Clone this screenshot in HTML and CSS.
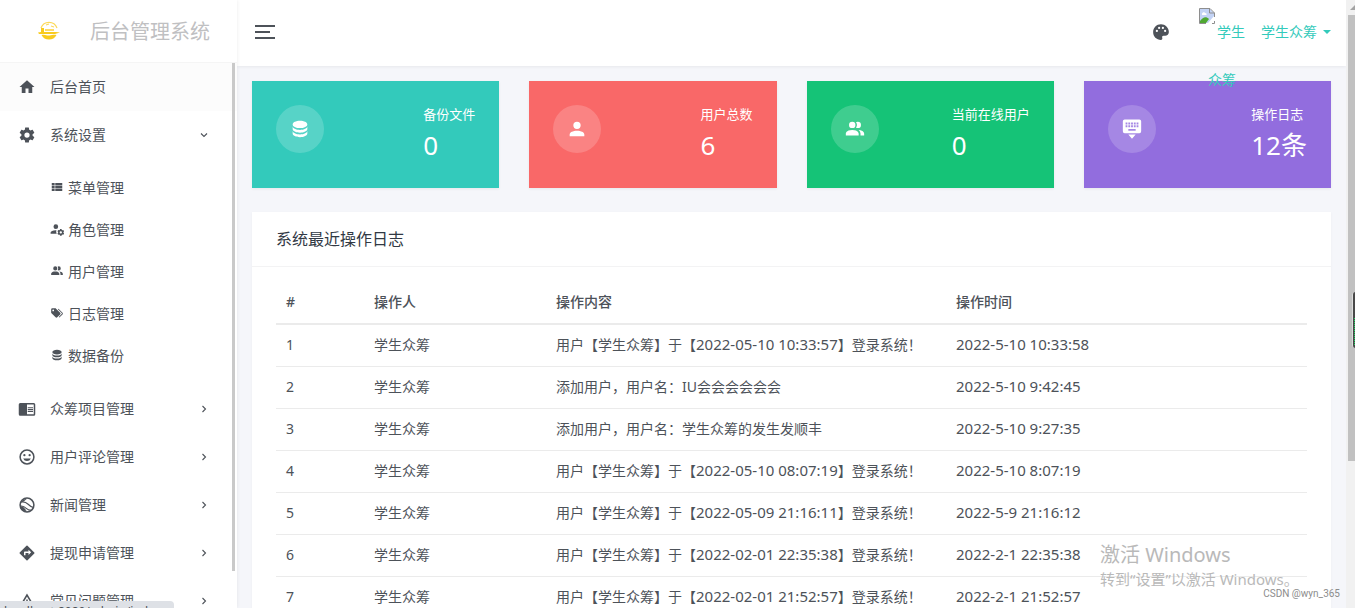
FILE: index.html
```html
<!DOCTYPE html>
<html lang="zh-CN">
<head>
<meta charset="utf-8">
<title>后台管理系统</title>
<link rel="stylesheet" href="styles.css">
</head>
<body>
<svg class="sprite" aria-hidden="true">
  <symbol id="home" viewBox="0 0 24 24"><path d="M10 20v-6h4v6h5v-8h3L12 3 2 12h3v8z"/></symbol>
  <symbol id="cog" viewBox="0 0 24 24"><path d="M12,15.5A3.5,3.5 0 0,1 8.5,12A3.5,3.5 0 0,1 12,8.5A3.5,3.5 0 0,1 15.5,12A3.5,3.5 0 0,1 12,15.5M19.43,12.97C19.47,12.65 19.5,12.33 19.5,12C19.5,11.67 19.47,11.34 19.43,11L21.54,9.37C21.73,9.22 21.78,8.95 21.66,8.73L19.66,5.27C19.54,5.05 19.27,4.96 19.05,5.05L16.56,6.05C16.04,5.66 15.5,5.32 14.87,5.07L14.5,2.42C14.46,2.18 14.25,2 14,2H10C9.75,2 9.54,2.18 9.5,2.42L9.13,5.07C8.5,5.32 7.96,5.66 7.44,6.05L4.95,5.05C4.73,4.96 4.46,5.05 4.34,5.27L2.34,8.73C2.21,8.95 2.27,9.22 2.46,9.37L4.57,11C4.53,11.34 4.5,11.67 4.5,12C4.5,12.33 4.53,12.65 4.57,12.97L2.46,14.63C2.27,14.78 2.21,15.05 2.34,15.27L4.34,18.73C4.46,18.95 4.73,19.03 4.95,18.95L7.44,17.94C7.96,18.34 8.5,18.68 9.13,18.93L9.5,21.58C9.54,21.82 9.75,22 10,22H14C14.25,22 14.46,21.82 14.5,21.58L14.87,18.93C15.5,18.67 16.04,18.34 16.56,17.94L19.05,18.95C19.27,19.03 19.54,18.95 19.66,18.73L21.66,15.27C21.78,15.05 21.73,14.78 21.54,14.63L19.43,12.97Z"/></symbol>
  <symbol id="list" viewBox="0 0 24 24"><path d="M9 5v4h12V5M9 19h12v-4H9m0-1h12v-4H9M3 9h5V5H3m0 14h5v-4H3m0-1h5v-4H3"/></symbol>
  <symbol id="user-cog" viewBox="0 0 24 24"><path d="M10 4a4 4 0 0 1 0 8 4 4 0 0 1 0-8m1 10.1a7 7 0 0 0 .5 5.900H1v-2c0-2.500 5-4.300 10-3.900"/><path fill-rule="evenodd" d="M17.200 12h2.600l.4 1.500 1.200.7 1.500-.4 1.300 2.200-1.100 1.100v1.400l1.100 1.100-1.300 2.200-1.500-.4-1.200.7-.4 1.500h-2.600l-.4-1.500-1.200-.7-1.500.4-1.300-2.200 1.100-1.100v-1.400l-1.100-1.100 1.300-2.200 1.500.4 1.200-.7zm1.300 3.800a2 2 0 1 0 0 4 2 2 0 0 0 0-4"/></symbol>
  <symbol id="users" viewBox="0 0 24 24"><path d="M16 17v2H2v-2s0-4 7-4 7 4 7 4m-3.500-9.500a3.500 3.500 0 1 0-7 0 3.500 3.500 0 0 0 7 0m3.440 5.500A5.320 5.320 0 0 1 18 17v2h4v-2s0-3.630-6.060-4M15 4a3.390 3.390 0 0 0-1.930.59 5 5 0 0 1 0 5.820A3.390 3.390 0 0 0 15 11a3.500 3.500 0 0 0 0-7"/></symbol>
  <symbol id="tags" viewBox="0 0 24 24"><path fill-rule="evenodd" d="M5.500 9A1.500 1.500 0 1 0 4 7.500 1.500 1.500 0 0 0 5.500 9m11.910 2.580c.36.360.59.860.59 1.420s-.22 1.050-.59 1.410l-5 5a1.990 1.990 0 0 1-2.830 0l-6.990-7A2 2 0 0 1 2 11V6a2 2 0 0 1 2-2h5c.55 0 1.050.22 1.410.58zm-3.870-5.870 1-1 6.870 6.870c.37.360.59.870.59 1.420s-.22 1.050-.58 1.410l-5.380 5.380-1-1L20.750 13z"/></symbol>
  <symbol id="database" viewBox="0 0 24 24"><path d="M12 3C7.580 3 4 4.790 4 7s3.580 4 8 4 8-1.790 8-4-3.580-4-8-4M4 9v3c0 2.210 3.580 4 8 4s8-1.790 8-4V9c0 2.210-3.580 4-8 4s-8-1.790-8-4m0 5v3c0 2.210 3.580 4 8 4s8-1.790 8-4v-3c0 2.210-3.580 4-8 4s-8-1.790-8-4"/></symbol>
  <symbol id="reader" viewBox="0 0 24 24"><path fill-rule="evenodd" d="M13 12h7v1.500h-7M13 9.500h7V11h-7m0 3.500h7V16h-7M21 4H3a2 2 0 0 0-2 2v13a2 2 0 0 0 2 2h18a2 2 0 0 0 2-2V6a2 2 0 0 0-2-2m0 15h-9V6h9"/></symbol>
  <symbol id="smile" viewBox="0 0 24 24"><circle cx="12" cy="12" r="9.200" fill="none" stroke="currentColor" stroke-width="2"/><circle cx="8.500" cy="9.500" r="1.500"/><circle cx="15.500" cy="9.500" r="1.500"/><path d="M6.900 14h10.200a5.500 5.500 0 0 1-10.200 0"/></symbol>
  <symbol id="earth" viewBox="0 0 24 24"><g fill="none" stroke="currentColor"><circle cx="12" cy="12" r="9.200" stroke-width="2"/><path stroke-width="1.500" d="M4.500 8c5-1 7 1 9 3s4 4 7.500 4.500M3 13.500c4-1 6 1 8 3s4 2.500 6.500 2.500"/></g><path d="M3 9.500 7.500 4.500 12 3.500 8 7zM3 13.500l3.500.5 5 5.500-4 .5-4-3z"/></symbol>
  <symbol id="direction" viewBox="0 0 24 24"><path fill-rule="evenodd" d="M14 14.500V12h-4v3H8v-4a1 1 0 0 1 1-1h5V7.500l3.500 3.500m4.210.29-9-9a1 1 0 0 0-1.420 0l-9 9a1 1 0 0 0 0 1.420l9 9a1 1 0 0 0 1.420 0l9-9a1 1 0 0 0 0-1.420"/></symbol>
  <symbol id="warning" viewBox="0 0 24 24"><path fill="none" stroke="currentColor" stroke-width="2" d="M12 4 2.500 20h19z"/><path d="M11 10h2v5h-2zm0 6h2v2h-2z"/></symbol>
  <symbol id="palette" viewBox="0 0 24 24"><path fill-rule="evenodd" d="M17.500 12a1.500 1.500 0 1 1 0-3 1.500 1.500 0 0 1 0 3m-3-4a1.500 1.500 0 1 1 0-3 1.500 1.500 0 0 1 0 3m-5 0a1.500 1.500 0 1 1 0-3 1.500 1.500 0 0 1 0 3m-3 4a1.500 1.500 0 1 1 0-3 1.500 1.500 0 0 1 0 3M12 1.500C6 1.500 1.500 6 1.500 12S6 22.500 12 22.500c1 0 1.800-.8 1.800-1.700 0-1.300-.7-1.800 0-3 .4-.5.8-.8 1.500-.8h2.200c2.800 0 5-2.200 5-5 0-6-5-10.500-10.500-10.500"/></symbol>
  <symbol id="user" viewBox="0 0 24 24"><path d="M12 4a4 4 0 1 1 0 8 4 4 0 0 1 0-8m0 10c4.420 0 8 1.790 8 4v2H4v-2c0-2.210 3.580-4 8-4"/></symbol>
  <symbol id="keyboard" viewBox="0 0 24 24"><path fill-rule="evenodd" d="M4 1.500h16a2 2 0 0 1 2 2v11a2 2 0 0 1-2 2H4a2 2 0 0 1-2-2v-11a2 2 0 0 1 2-2M5 5v2h2V5zm3 0v2h2V5zm3 0v2h2V5zm3 0v2h2V5zm3 0v2h2V5zM5 8v2h2V8zm3 0v2h2V8zm3 0v2h2V8zm3 0v2h2V8zm3 0v2h2V8zm-9 4v2h8v-2zM8 18h8l-4 4.500z"/></symbol>
  <symbol id="chevron" viewBox="0 0 10 10"><path fill="none" stroke="currentColor" stroke-width="1.100" d="m3.500 2 3 3-3 3"/></symbol>
</svg>

<div class="app">
  <aside class="sidebar">
    <a class="brand" href="#">
      <svg class="brand-logo" viewBox="0 0 22 20" aria-hidden="true">
        <path fill="none" stroke="#fcd95a" stroke-width="1.200" d="M3 7a8.500 8.500 0 0 1 16 0M8 4l3-1M13 5l3 1"/>
        <path fill="#f9cb1e" d="M3 7h3v4h12l4 .5-5 1.500H1l-1-1.500 3-.5z"/>
        <path fill="#fcdc6a" d="M7 8h9v2H7z"/>
        <path fill="#f9cb1e" d="M3.500 14c4-1 5 1 8 .5s4-1 7-.5a8.500 8.500 0 0 1-15 0"/>
      </svg>
      <span>后台管理系统</span>
    </a>
    <nav class="menu">
      <a class="item active" href="#"><svg><use href="#home"/></svg><span>后台首页</span></a>
      <a class="item open" href="#"><svg><use href="#cog"/></svg><span>系统设置</span><svg class="arrow"><use href="#chevron"/></svg></a>
      <div class="submenu">
        <a href="#"><svg><use href="#list"/></svg>菜单管理</a>
        <a href="#"><svg><use href="#user-cog"/></svg>角色管理</a>
        <a href="#"><svg><use href="#users"/></svg>用户管理</a>
        <a href="#"><svg><use href="#tags"/></svg>日志管理</a>
        <a href="#"><svg><use href="#database"/></svg>数据备份</a>
      </div>
      <a class="item" href="#"><svg><use href="#reader"/></svg><span>众筹项目管理</span><svg class="arrow"><use href="#chevron"/></svg></a>
      <a class="item" href="#"><svg><use href="#smile"/></svg><span>用户评论管理</span><svg class="arrow"><use href="#chevron"/></svg></a>
      <a class="item" href="#"><svg><use href="#earth"/></svg><span>新闻管理</span><svg class="arrow"><use href="#chevron"/></svg></a>
      <a class="item" href="#"><svg><use href="#direction"/></svg><span>提现申请管理</span><svg class="arrow"><use href="#chevron"/></svg></a>
      <a class="item" href="#"><svg><use href="#warning"/></svg><span>常见问题管理</span><svg class="arrow"><use href="#chevron"/></svg></a>
      <div class="menu-thumb"></div>
    </nav>
  </aside>

  <div class="page">
    <header class="topbar">
      <button class="toggler" type="button" aria-label="切换菜单"><i></i><i></i><i></i></button>
      <div class="tools">
        <button class="theme" type="button" aria-label="主题"><svg><use href="#palette"/></svg></button>
        <a class="profile" href="#">
          <span class="avatar"><svg viewBox="0 0 16 16" aria-hidden="true"><path fill="#c3d3f5" d="M1 1h10l4 4v10H1z"/><path fill="#fff" d="M3 6c0-2 3-2 3-1 2 0 2 2 1 2H3zM15 8l-6 7h6z"/><path fill="#4fa832" d="M1 15v-2c3-4 6-5 9-2l-3 4z"/><path fill="none" stroke="#8e8e8e" d="M7 15.500H.5V.5H11l4.500 4.500v4M10.500.5V5h5M15.500 13v2.500H13"/></svg>学生<br>众筹</span>
          <span>学生众筹</span><i class="caret"></i>
        </a>
      </div>
    </header>

    <main class="content">
      <section class="stats">
        <article class="stat teal"><span class="badge"><svg><use href="#database"/></svg></span><div><p>备份文件</p><strong>0</strong></div></article>
        <article class="stat red"><span class="badge"><svg><use href="#user"/></svg></span><div><p>用户总数</p><strong>6</strong></div></article>
        <article class="stat green"><span class="badge"><svg><use href="#users"/></svg></span><div><p>当前在线用户</p><strong>0</strong></div></article>
        <article class="stat purple"><span class="badge"><svg><use href="#keyboard"/></svg></span><div><p>操作日志</p><strong>12条</strong></div></article>
      </section>

      <section class="panel">
        <h1>系统最近操作日志</h1>
        <div class="panel-body">
          <table>
            <colgroup><col class="c-id"><col class="c-user"><col class="c-text"><col></colgroup>
            <thead><tr><th>#</th><th>操作人</th><th>操作内容</th><th>操作时间</th></tr></thead>
            <tbody>
              <tr><td>1</td><td>学生众筹</td><td>用户【学生众筹】于【<time>2022-05-10 10:33:57</time>】登录系统！</td><td><time>2022-5-10 10:33:58</time></td></tr>
              <tr><td>2</td><td>学生众筹</td><td>添加用户，用户名：IU会会会会会会</td><td><time>2022-5-10 9:42:45</time></td></tr>
              <tr><td>3</td><td>学生众筹</td><td>添加用户，用户名：学生众筹的发生发顺丰</td><td><time>2022-5-10 9:27:35</time></td></tr>
              <tr><td>4</td><td>学生众筹</td><td>用户【学生众筹】于【<time>2022-05-10 08:07:19</time>】登录系统！</td><td><time>2022-5-10 8:07:19</time></td></tr>
              <tr><td>5</td><td>学生众筹</td><td>用户【学生众筹】于【<time>2022-05-09 21:16:11</time>】登录系统！</td><td><time>2022-5-9 21:16:12</time></td></tr>
              <tr><td>6</td><td>学生众筹</td><td>用户【学生众筹】于【<time>2022-02-01 22:35:38</time>】登录系统！</td><td><time>2022-2-1 22:35:38</time></td></tr>
              <tr><td>7</td><td>学生众筹</td><td>用户【学生众筹】于【<time>2022-02-01 21:52:57</time>】登录系统！</td><td><time>2022-2-1 21:52:57</time></td></tr>
            </tbody>
          </table>
        </div>
      </section>
    </main>
  </div>

  <div class="scrollbar"><i class="scroll-up"></i><div class="scroll-thumb"></div></div>
</div>

<div class="meter"><i></i></div>
<div class="activate"><p>激活 Windows</p><small>转到“设置”以激活 Windows。</small></div>
<div class="credit">CSDN @wyn_365</div>
<div class="status">localhost:8080/admin/index</div>
</body>
</html>
```
FILE: styles.css
```css
* { box-sizing: border-box; }

body {
  margin: 0;
  height: 100vh;
  overflow: hidden;
  position: relative;
  font: 14px/21px "Noto Sans", "Noto Sans CJK SC", sans-serif;
  color: #4d5259;
  background: #f5f6fa;
}

a { color: inherit; text-decoration: none; }
p { margin: 0; }
svg { fill: currentColor; }
button { padding: 0; border: 0; background: none; color: inherit; }
.sprite { display: none; }
.app { display: flex; height: 100%; overflow: hidden; }

/* Sidebar */
.sidebar {
  flex: 0 0 237px;
  display: flex;
  flex-direction: column;
  background: #fff;
  box-shadow: 0 0 4px rgba(0, 0, 0, .08);
  z-index: 1;
}
.brand {
  flex: 0 0 63px;
  display: flex;
  align-items: center;
  gap: 30px;
  padding-left: 38px;
  border-bottom: 1px solid #f5f5f5;
  font-size: 20px;
  color: #bfc0c2;
}
.brand-logo { width: 22px; height: 20px; }
.menu { flex: 1; min-height: 0; overflow: hidden; position: relative; }
.item {
  display: flex;
  align-items: center;
  gap: 14px;
  height: 48px;
  padding: 0 28px 0 18px;
}
.item.active { background: #fcfcfc; }
.item span { padding-bottom: 2px; }
.item svg { width: 18px; height: 18px; }
.item .arrow { width: 10px; height: 10px; margin-left: auto; }
.item.open .arrow { transform: rotate(90deg); }
.submenu { padding: 7px 0 9px; }
.submenu a {
  display: flex;
  align-items: center;
  gap: 4px;
  height: 42px;
  padding-left: 50px;
}
.submenu svg { width: 14px; height: 14px; }
.menu-thumb {
  position: absolute;
  top: 0;
  right: 2px;
  width: 3px;
  height: 508px;
  background: #c9c9c9;
}

/* Top bar */
.page { flex: 1; min-width: 0; }
.topbar {
  display: flex;
  align-items: flex-start;
  justify-content: space-between;
  height: 66px;
  padding: 8px 15px 0 18px;
  background: #fff;
  box-shadow: 0 1px 3px rgba(0, 0, 0, .06);
}
.toggler {
  display: flex;
  flex-direction: column;
  justify-content: center;
  gap: 4px;
  width: 20px;
  height: 48px;
}
.toggler i { height: 2px; width: 20px; background: #4d5259; }
.toggler i:nth-child(2) { width: 15px; }
.tools { display: flex; height: 48px; gap: 28px; }
.theme { display: flex; align-items: center; }
.theme svg { width: 18px; height: 18px; }
.profile {
  display: flex;
  height: 48px;
  line-height: 48px;
  color: #33cabb;
}
.avatar { width: 48px; margin-right: 15px; text-align: center; z-index: 2; }
.avatar svg { width: 16px; height: 16px; margin-right: 2px; vertical-align: top; }
.caret {
  align-self: center;
  margin-left: 6px;
  border: 4px solid transparent;
  border-top-color: currentColor;
  border-bottom: 0;
}

/* Content */
.content { padding: 15px; }
.stats { display: grid; grid-template-columns: repeat(4, 1fr); gap: 30px; }
.stat {
  display: flex;
  justify-content: space-between;
  height: 107px;
  padding: 24px;
  color: #fff;
  box-shadow: 0 1px 3px rgba(0, 0, 0, .06);
}
.teal { background: #33cabb; }
.red { background: #f96868; }
.green { background: #15c377; }
.purple { background: #926dde; }
.badge {
  display: grid;
  place-items: center;
  width: 48px;
  height: 48px;
  border-radius: 50%;
  background: rgba(255, 255, 255, .18);
}
.badge svg { width: 22px; height: 22px; }
.stat p { font-size: 13px; line-height: 18px; }
.stat strong { display: block; font-size: 26px; line-height: 44px; font-weight: 400; }
.panel {
  margin-top: 24px;
  background: #fff;
  box-shadow: 0 1px 3px rgba(0, 0, 0, .04);
}
.panel h1 {
  margin: 0;
  padding: 15px 24px;
  border-bottom: 1px solid #f3f3f4;
  font-size: 16px;
  line-height: 24px;
  font-weight: 400;
  color: #313944;
}
.panel-body { padding: 15px 24px; }
table { width: 100%; table-layout: fixed; border-collapse: separate; border-spacing: 0; }
.c-id { width: 88px; }
.c-user { width: 182px; }
.c-text { width: 400px; }
th, td { padding: 9px 10px 11px; text-align: left; line-height: 21px; }
th { border-bottom: 2px solid #ebebeb; font-weight: 500; }
td { border-bottom: 1px solid #ebebeb; white-space: nowrap; }
time { font-size: 15px; }

/* Window chrome and overlays */
.scrollbar { flex: 0 0 9px; padding: 5px 0 0 2px; background: #f1f1f1; overflow: hidden; }
.scroll-up {
  display: block;
  width: 0;
  margin-left: 2px;
  border: 5px solid transparent;
  border-top: 0;
  border-bottom-color: #a3a3a3;
}
.scroll-thumb { height: 446px; margin-top: 5px; background: #c1c1c1; }
.meter {
  position: absolute;
  right: 0;
  top: 292px;
  width: 3px;
  height: 56px;
  padding: 26px 0 2px 1px;
  border-left: 1px solid #ddd;
  border-radius: 4px 0 0 4px;
  background: #484848;
}
.meter i { display: block; height: 100%; background: repeating-linear-gradient(#22d763 0 1px, #484848 1px 2px); }
.activate { position: absolute; right: 50px; bottom: 18px; width: 205px; color: #b9b9b9; white-space: nowrap; }
.activate p { font-size: 20px; line-height: 26px; }
.activate small { display: block; font-size: 15px; line-height: 22px; }
.credit { position: absolute; right: 15px; bottom: 6px; font: 10px/16px Roboto, sans-serif; color: #8c8c8c; }
.status {
  position: absolute;
  left: 0;
  bottom: 0;
  width: 174px;
  height: 7px;
  padding: 3px 4px 0;
  overflow: hidden;
  border-radius: 0 4px 0 0;
  background: #dee1e6;
  font-size: 12px;
  line-height: 16px;
  z-index: 3;
}
```
